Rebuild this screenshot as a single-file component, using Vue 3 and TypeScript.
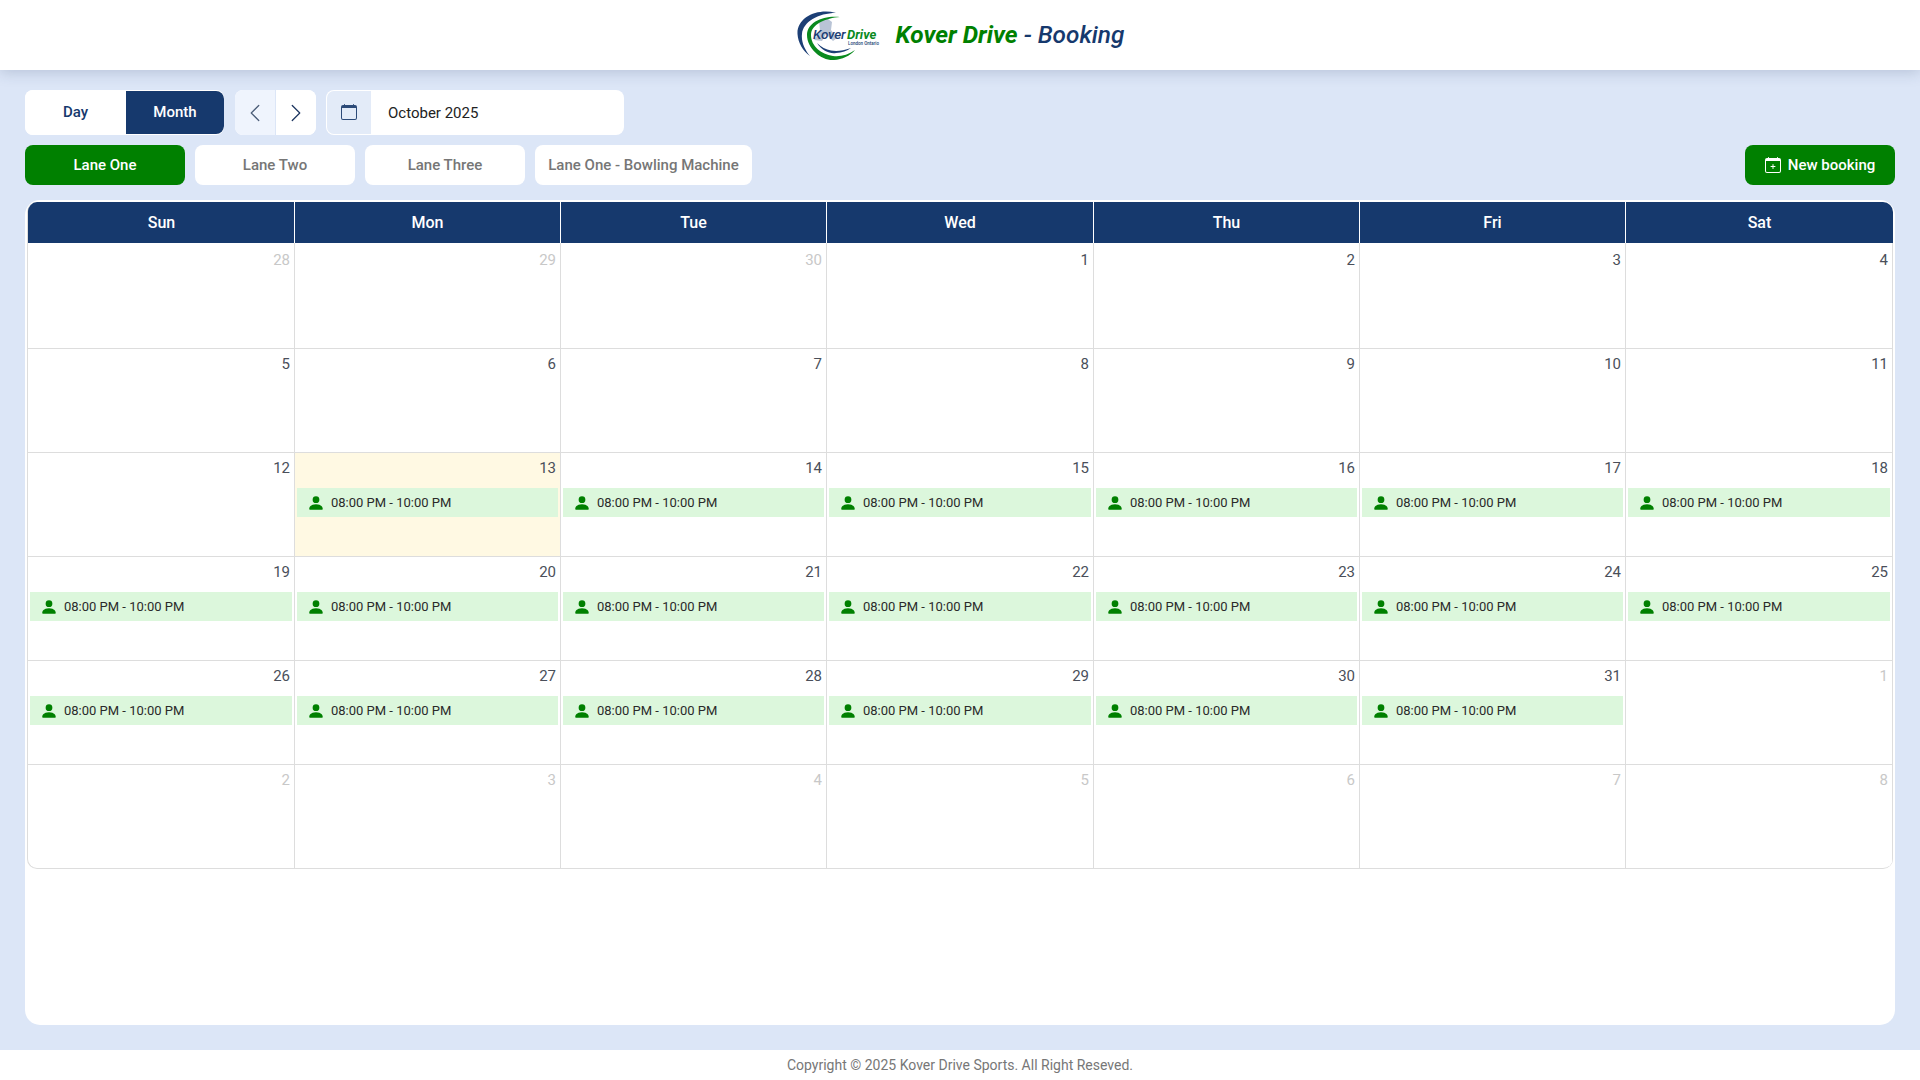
<script setup lang="ts">
interface Day {
  num: number
  muted: boolean
  today: boolean
  booked: boolean
}

const weekDays = ['Sun', 'Mon', 'Tue', 'Wed', 'Thu', 'Fri', 'Sat']
const lanes = ['Lane One', 'Lane Two', 'Lane Three', 'Lane One - Bowling Machine']

const days: Day[] = []
for (const n of [28, 29, 30]) days.push({ num: n, muted: true, today: false, booked: false })
for (let n = 1; n <= 31; n++) {
  days.push({ num: n, muted: false, today: n === 13, booked: n >= 13 })
}
for (let n = 1; n <= 8; n++) days.push({ num: n, muted: true, today: false, booked: false })
</script>

<template>
  <div class="page">
    <header class="topbar">
      <svg class="logo" width="84" height="52" viewBox="0 0 84 52">
        <path d="M23 11l9-1 4 3-1 8 6 8-4 3-7-7-4 7-8-1 6-9z" fill="#b9c4d6" />
        <path d="M40 4C22-1 1 8 1.500 25 2 34 7 42 14 47 9 41 5 33 6 25 7 13 22 4 40 4z" fill="#1c3f75" />
        <path d="M44 8C28 6 11 13 11 26c0 14 15 26 27 25 8-.5 16-4 21-10-7 5-15 7-22 6C25 45 15 37 15 26 15 15 30 9 44 8z" fill="#0a8a1e" />
        <path d="M21 34c5 8 13 11 19 10 6-.5 11-2 15-5-8 3-15 3.500-20 2.500-5-1-10-3.500-14-7.500z" fill="#1c3f75" />
        <text x="17" y="30" class="logo-kover">Kover</text>
        <text x="51" y="30" class="logo-drive">Drive</text>
        <text x="52" y="36" class="logo-sub">London Ontario</text>
      </svg>
      <h1 class="brand"><span class="brand-green">Kover Drive</span> - Booking</h1>
    </header>

    <main class="content">
      <div class="controls">
        <div class="view-toggle">
          <button class="view-btn">Day</button>
          <button class="view-btn active">Month</button>
        </div>
        <div class="arrows">
          <button class="arrow first">
            <svg width="20" height="20" viewBox="0 0 16 16" fill="#4b5d78"><path d="M11.354 1.646a.5.5 0 0 1 0 .708L5.707 8l5.647 5.646a.5.5 0 0 1-.708.708l-6-6a.5.5 0 0 1 0-.708l6-6a.5.5 0 0 1 .708 0" /></svg>
          </button>
          <button class="arrow">
            <svg width="20" height="20" viewBox="0 0 16 16" fill="#1c3560"><path d="M4.646 1.646a.5.5 0 0 1 .708 0l6 6a.5.5 0 0 1 0 .708l-6 6a.5.5 0 0 1-.708-.708L10.293 8 4.646 2.354a.5.5 0 0 1 0-.708" /></svg>
          </button>
        </div>
        <div class="date-field">
          <span class="date-icon">
            <svg width="16" height="16" viewBox="0 0 16 16" fill="#2c4a78"><path d="M3.500 0a.5.5 0 0 1 .5.5V1h8V.5a.5.5 0 0 1 1 0V1h1a2 2 0 0 1 2 2v11a2 2 0 0 1-2 2H2a2 2 0 0 1-2-2V3a2 2 0 0 1 2-2h1V.5a.5.5 0 0 1 .5-.5M1 4v10a1 1 0 0 0 1 1h12a1 1 0 0 0 1-1V4z" /></svg>
          </span>
          <span class="date-text">October 2025</span>
        </div>
      </div>

      <div class="lane-row">
        <button v-for="(lane, i) in lanes" :key="lane" :class="['lane', { active: i === 0, wide: i === 3 }]">{{ lane }}</button>
        <button class="new-booking">
          <svg width="16" height="16" viewBox="0 0 16 16" fill="#fff">
            <path d="M8 7a.5.5 0 0 1 .5.5V9H10a.5.5 0 0 1 0 1H8.500v1.500a.5.5 0 0 1-1 0V10H6a.5.5 0 0 1 0-1h1.500V7.500A.5.5 0 0 1 8 7" />
            <path d="M3.500 0a.5.5 0 0 1 .5.5V1h8V.5a.5.5 0 0 1 1 0V1h1a2 2 0 0 1 2 2v11a2 2 0 0 1-2 2H2a2 2 0 0 1-2-2V3a2 2 0 0 1 2-2h1V.5a.5.5 0 0 1 .5-.5M1 4v10a1 1 0 0 0 1 1h12a1 1 0 0 0 1-1V4z" />
          </svg>
          New booking
        </button>
      </div>

      <section class="card">
        <div class="calendar">
          <div v-for="d in weekDays" :key="d" class="head-cell">{{ d }}</div>
          <div v-for="(day, i) in days" :key="i" :class="['cell', { today: day.today }]">
            <div :class="['num', { muted: day.muted }]">{{ day.num }}</div>
            <div v-if="day.booked" class="event">
              <svg width="18" height="18" viewBox="0 0 16 16" fill="#008000"><path d="M3 14s-1 0-1-1 1-4 6-4 6 3 6 4-1 1-1 1zm5-6a3 3 0 1 0 0-6 3 3 0 0 0 0 6" /></svg>
              <span>08:00 PM - 10:00 PM</span>
            </div>
          </div>
        </div>
      </section>
    </main>

    <footer class="footer">Copyright © 2025 Kover Drive Sports. All Right Reseved.</footer>
  </div>
</template>

<style>
html,
body {
  margin: 0;
}
</style>

<style scoped>
.page {
  height: 1080px;
  display: flex;
  flex-direction: column;
  font-family: Roboto, "Liberation Sans", sans-serif;
  background: #dce6f7;
  overflow: hidden;
}

button {
  font-family: inherit;
  border: none;
  cursor: pointer;
}

.topbar {
  height: 70px;
  flex: none;
  background: #fff;
  display: flex;
  align-items: center;
  justify-content: center;
  gap: 16px;
  box-shadow: 0 2px 14px rgba(40, 60, 100, 0.22);
  position: relative;
}

.logo {
  display: block;
}

.logo-kover {
  font: italic 500 13.5px Roboto, sans-serif;
  letter-spacing: -0.2px;
  fill: #1c3f75;
}

.logo-drive {
  font: italic 700 13px Roboto, sans-serif;
  fill: #0a8a1e;
}

.logo-sub {
  font: 500 4.5px Roboto, sans-serif;
  fill: #1c3f75;
}

.brand {
  margin: 0 0 2px;
  font-size: 24.4px;
  font-weight: 500;
  font-style: italic;
  color: #16396d;
}

.brand-green {
  font-weight: 700;
  color: #008000;
}

.content {
  flex: 1;
  display: flex;
  flex-direction: column;
  padding: 20px 25px 25px;
  min-height: 0;
}

.controls {
  display: flex;
  gap: 10px;
  height: 45px;
}

.view-toggle {
  display: flex;
  width: 199px;
  margin-right: 1px;
  background: #fff;
  border-radius: 8px;
  overflow: hidden;
}

.view-btn {
  font-size: 15px;
  font-weight: 500;
  color: #16396d;
  background: #fff;
  width: 101px;
  padding: 0 0 2px;
}

.view-btn.active {
  width: 98px;
  margin: 1px 0;
  border-radius: 0 8px 8px 0;
  color: #fff;
  background: #16396d;
}

.arrows {
  display: flex;
  width: 81px;
  background: #fff;
  border-radius: 8px;
  overflow: hidden;
}

.arrow {
  flex: 1;
  padding: 0;
  background: #fff;
  display: flex;
  align-items: center;
  justify-content: center;
}

.arrow.first {
  background: #eff4fd;
  border-right: 1px solid #dce6f7;
}

.date-field {
  width: 298px;
  display: flex;
  background: #fff;
  border-radius: 8px;
  overflow: hidden;
}

.date-icon {
  width: 44px;
  margin: 1px 0 1px 1px;
  padding-bottom: 2px;
  box-sizing: border-box;
  border-radius: 7px 0 0 7px;
  background: #e3ebf8;
  display: flex;
  align-items: center;
  justify-content: center;
}

.date-text {
  font-size: 15px;
  line-height: 47px;
  padding-left: 17px;
  color: #222;
}

.lane-row {
  display: flex;
  gap: 10px;
  height: 40px;
  margin-top: 10px;
}

.lane {
  width: 160px;
  font-size: 15px;
  font-weight: 500;
  color: #767676;
  background: #fff;
  border-radius: 8px;
  padding: 0;
}

.lane.wide {
  width: 217px;
}

.lane.active {
  color: #fff;
  background: #008000;
}

.new-booking {
  margin-left: auto;
  width: 150px;
  display: flex;
  align-items: center;
  justify-content: center;
  gap: 7px;
  font-size: 15px;
  font-weight: 500;
  color: #fff;
  background: #008000;
  border-radius: 8px;
}

.card {
  flex: 1;
  margin-top: 15px;
  padding: 2px;
  background: #fff;
  border-radius: 15px;
}

.calendar {
  display: grid;
  grid-template-columns: 266px 266px 266px 267px 266px 266px 268px;
  grid-template-rows: 41px 106px 104px 104px 104px 104px 103px;
  border-left: 1px solid #ddd;
  border-bottom: 1px solid #ddd;
  border-radius: 10px;
  overflow: hidden;
}

.head-cell {
  background: #16396d;
  color: #fff;
  font-size: 16px;
  font-weight: 500;
  display: flex;
  align-items: center;
  justify-content: center;
  border-left: 1px solid #fff;
}

.head-cell:first-child {
  border-left-color: #16396d;
}

.cell {
  border-left: 1px solid #ddd;
  border-bottom: 1px solid #ddd;
  box-sizing: border-box;
  padding-top: 5px;
  min-width: 0;
}

.cell:nth-child(7n + 1) {
  border-left: none;
}

.cell:nth-child(7n) {
  border-right: 1px solid #ddd;
}

.cell:nth-child(-n + 14) {
  padding-top: 7px;
}

.cell:nth-last-child(-n + 7) {
  border-bottom: none;
}

.cell.today {
  background: #fff9e3;
}

.num {
  text-align: right;
  font-size: 15px;
  line-height: 21px;
  padding-right: 4px;
  color: #4a4f5a;
}

.num.muted {
  color: #c8c8c8;
}

.event {
  height: 29px;
  margin: 9px 2px 0;
  padding-left: 10px;
  display: flex;
  align-items: center;
  gap: 6px;
  background: #dcf7dc;
  font-size: 13px;
  color: #2a2a2a;
}

.footer {
  height: 30px;
  flex: none;
  background: #fff;
  display: flex;
  align-items: center;
  justify-content: center;
  font-size: 14px;
  color: #777;
  padding-bottom: 1px;
  box-sizing: border-box;
}
</style>
